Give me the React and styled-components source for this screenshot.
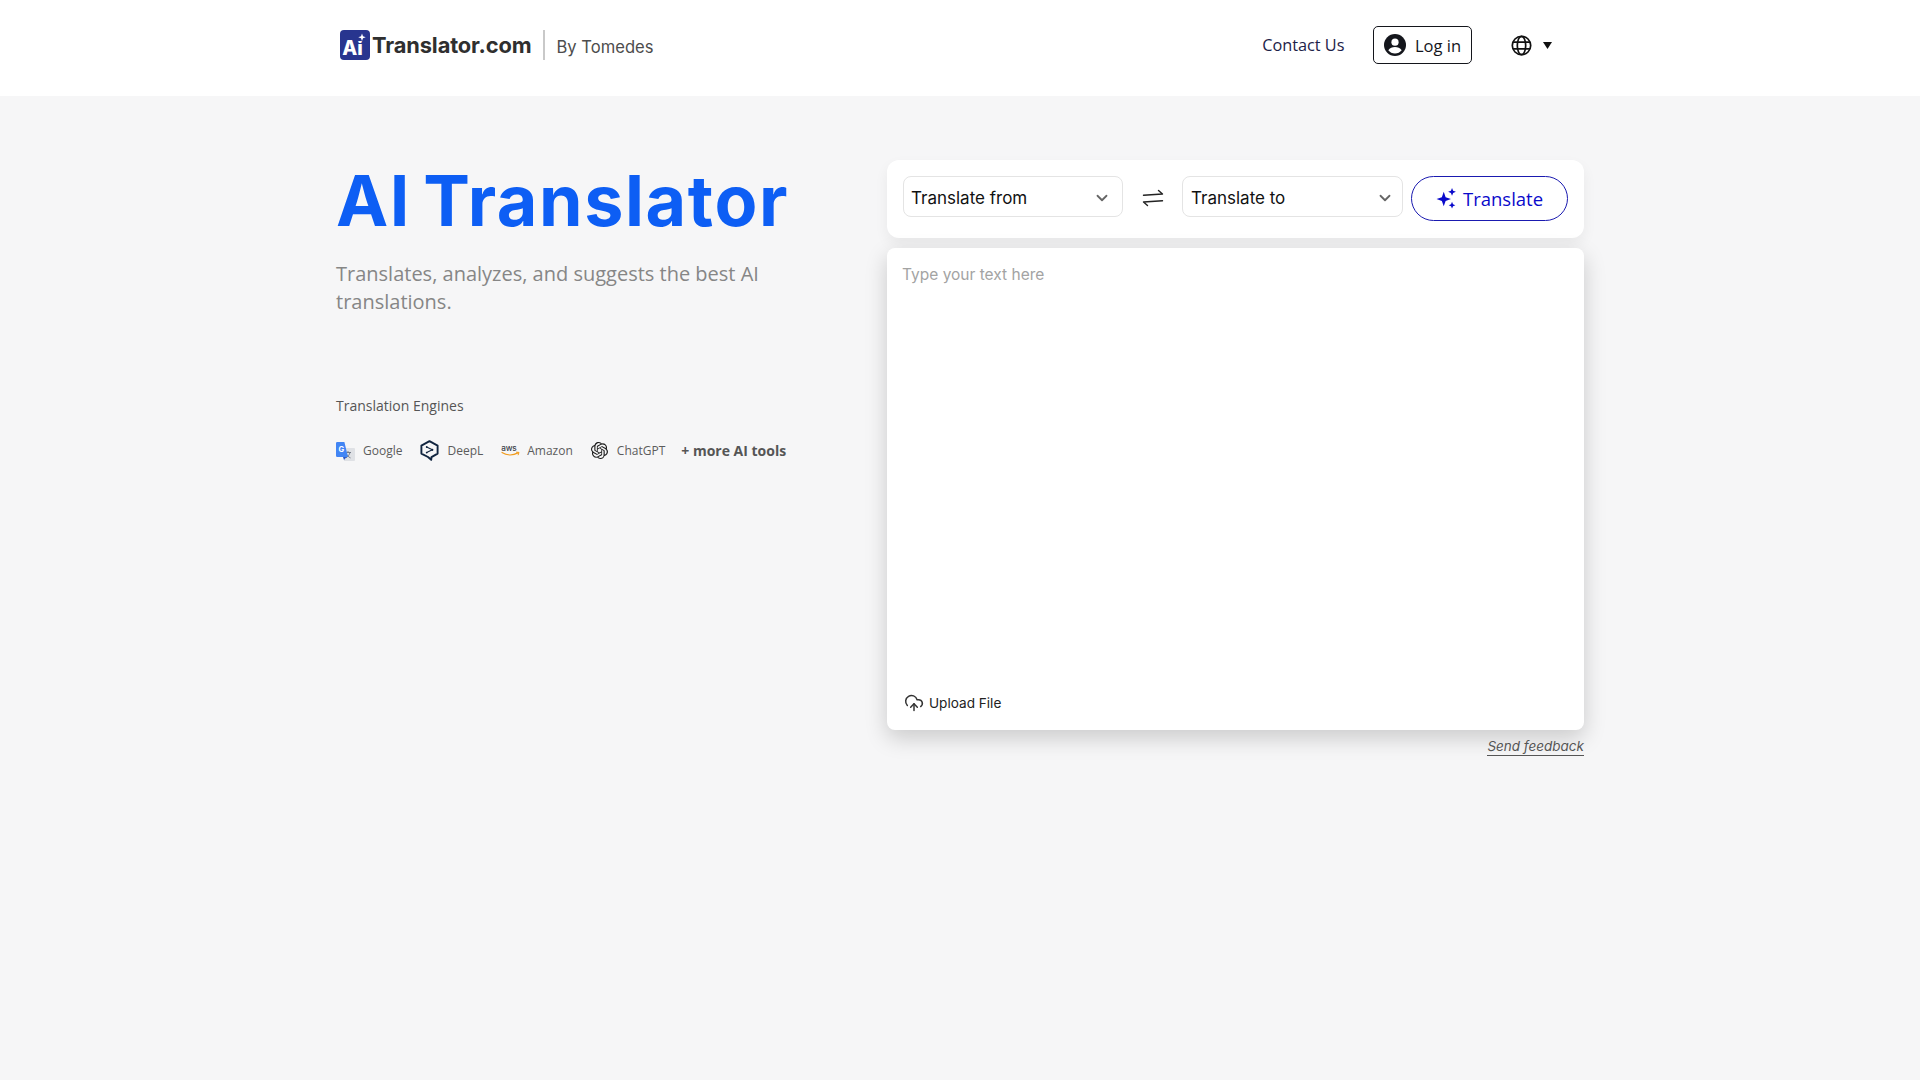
import React from "react";
import styled, { createGlobalStyle } from "styled-components";
import { ChevronDown, CloudUpload } from "lucide-react";

const Global = createGlobalStyle`
  html, body { margin: 0; padding: 0; background: #f6f6f7; }
  body { font-family: "Open Sans", sans-serif; }
  * { box-sizing: border-box; }
`;

const Page = styled.div`
  width: 1920px;
  height: 1080px;
  overflow: hidden;
  background: #f6f6f7;
`;

const Header = styled.header`
  height: 96px;
  background: #fff;
  padding: 0 368.5px 6px 340px;
  display: flex;
  align-items: center;
  justify-content: space-between;
`;

const Brand = styled.div`
  display: flex;
  align-items: center;
`;

const LogoWord = styled.span`
  font-family: Inter, sans-serif;
  font-weight: 700;
  font-size: 21.8px;
  letter-spacing: -0.1px;
  color: #2f2f2f;
  margin-left: 2px;
`;

const Divider = styled.span`
  width: 2px;
  height: 30px;
  background: #c9c9c9;
  margin: 0 12px 0 11px;
`;

const ByLine = styled.span`
  font-family: Inter, sans-serif;
  font-size: 16.6px;
  color: #4d4d4d;
  padding-top: 3px;
`;

const Nav = styled.nav`
  display: flex;
  align-items: center;
`;

const Contact = styled.a`
  font-size: 16.3px;
  font-weight: 500;
  color: #1c2248;
  margin-right: 28.5px;
`;

const Login = styled.button`
  width: 99px;
  height: 38px;
  padding: 0 0 0 10px;
  display: flex;
  align-items: center;
  gap: 9px;
  background: #fff;
  border: 1px solid #14161c;
  border-radius: 5px;
  font: 500 16.5px "Open Sans", sans-serif;
  color: #14161c;
`;

const Lang = styled.div`
  display: flex;
  align-items: center;
  margin-left: 38.5px;
  gap: 11px;
`;

const Main = styled.main`
  padding: 64px 336px 0;
  display: flex;
`;

const Left = styled.section`
  width: 551px;
`;

const Title = styled.h1`
  margin: 0;
  padding-top: 1px;
  font-family: Inter, sans-serif;
  font-weight: 700;
  font-size: 70px;
  line-height: 80px;
  letter-spacing: 1.6px;
  word-spacing: -6px;
  color: #0d5ef4;
`;

const Subtitle = styled.p`
  margin: 18.5px 0 0;
  width: 470px;
  font-size: 20px;
  line-height: 28px;
  color: #868686;
`;

const EnginesLabel = styled.div`
  margin-top: 80.5px;
  font-size: 14px;
  line-height: 20px;
  color: #555;
`;

const Engines = styled.div`
  margin-top: 21px;
  display: flex;
  align-items: center;
  height: 26px;
`;

const Engine = styled.div`
  display: flex;
  align-items: center;
  gap: ${(p) => p.$gap || 8}px;
  margin-right: ${(p) => p.$mr || 18}px;
  font-size: 12px;
  color: #5c5c5c;
`;

const More = styled.span`
  font-size: 14px;
  font-weight: 700;
  color: #555;
`;

const Right = styled.section`
  width: 697px;
`;

const Bar = styled.div`
  height: 78px;
  background: #fff;
  border-radius: 12px;
  padding: 16px;
  display: flex;
  align-items: flex-start;
  box-shadow: 0 6px 14px rgba(0, 0, 0, 0.06);
`;

const Select = styled.div`
  width: ${(p) => p.$w}px;
  height: 41px;
  border: 1px solid #e4e4e4;
  border-radius: 8px;
  padding: 3px ${(p) => p.$pr}px 0 ${(p) => p.$pl}px;
  display: flex;
  align-items: center;
  justify-content: space-between;
  font-family: Inter, sans-serif;
  font-size: 17px;
  color: #111;
`;

const Swap = styled.div`
  width: 59px;
  height: 41px;
  padding-top: 2px;
  display: flex;
  align-items: center;
  justify-content: center;
`;

const TranslateBtn = styled.button`
  margin-left: 8px;
  width: 157px;
  height: 45px;
  padding: 0;
  border: 1px solid #1a1ab0;
  border-radius: 23px;
  background: #fff;
  display: flex;
  align-items: center;
  justify-content: center;
  gap: 6px;
  font: 500 18.5px "Open Sans", sans-serif;
  color: #0a0acb;
`;

const Card = styled.div`
  margin-top: 10px;
  height: 482px;
  background: #fff;
  border-radius: 8px;
  padding: 16px;
  display: flex;
  flex-direction: column;
  justify-content: space-between;
  box-shadow: 0 8px 22px rgba(0, 0, 0, 0.18);
`;

const Placeholder = styled.div`
  margin-left: -1px;
  font-family: Inter, sans-serif;
  font-size: 15.5px;
  line-height: 22px;
  color: #a3a3a3;
`;

const Upload = styled.div`
  display: flex;
  align-items: center;
  gap: 5px;
  padding-left: 1px;
  font-family: Inter, sans-serif;
  font-size: 13.6px;
  font-weight: 400;
  color: #222;
  margin-bottom: 1px;
`;

const FeedbackRow = styled.div`
  display: flex;
  justify-content: flex-end;
  margin-top: 7px;
`;

const Feedback = styled.a`
  font-family: Inter, sans-serif;
  font-size: 13.5px;
  font-style: italic;
  line-height: 18px;
  color: #555;
  border-bottom: 1px solid #555;
`;

const IconNudge = styled.span`
  display: flex;
  margin-top: ${(p) => p.$top}px;
`;

const LogoMark = () => (
  <svg width="30" height="30" viewBox="0 0 30 30">
    <rect width="30" height="30" rx="4" fill="#28358f" />
    <text x="2.2" y="24.5" fontFamily="Inter, sans-serif" fontWeight="800" fontSize="19.5" fill="#fff">Ai</text>
    <rect x="18" y="2" width="8" height="9" fill="#28358f" />
    <path d="M22 3.5l1 2.7 2.7 1-2.7 1-1 2.7-1-2.7-2.7-1 2.7-1z" fill="#fff" />
  </svg>
);

const UserIcon = () => (
  <svg width="22" height="22" viewBox="0 0 22 22">
    <circle cx="11" cy="11" r="11" fill="#14161c" />
    <circle cx="11" cy="8.2" r="3.6" fill="#fff" />
    <path d="M4.3 16.2c1.5-2.2 4-3.2 6.7-3.2s5.2 1 6.7 3.2c-1.6 2-4 3.3-6.7 3.3s-5.1-1.3-6.7-3.3z" fill="#fff" />
  </svg>
);

const GlobeIcon = () => (
  <svg width="21" height="21" viewBox="0 0 21 21" fill="none" stroke="#111" strokeWidth="1.7">
    <circle cx="10.5" cy="10.5" r="9.2" />
    <ellipse cx="10.5" cy="10.5" rx="4.2" ry="9.2" />
    <path d="M2 7.2h17M2 13.8h17" />
  </svg>
);

const Caret = () => (
  <svg width="9" height="7" viewBox="0 0 9 7"><path d="M0 0h9L4.5 7z" fill="#111" /></svg>
);

const SwapIcon = () => (
  <svg width="22" height="18" viewBox="0 0 22 18" fill="none" stroke="#222" strokeWidth="1.4" strokeLinecap="round" strokeLinejoin="round">
    <path d="M1.5 6.3L20.5 5 16.5 1.5" />
    <path d="M20.5 11.7L1.5 13 5.5 16.5" />
  </svg>
);

const GoogleIcon = () => (
  <svg width="19" height="20" viewBox="0 0 19 20">
    <path d="M7 6h11a1 1 0 0 1 1 1v11a1 1 0 0 1-1 1H8z" fill="#dfe1e5" />
    <path d="M12 9v1.2M9.5 10.5h5.5M14 10.5c-.6 2.4-2.2 4.3-4 5.4M10.6 12.2c.8 1.6 2.3 3 3.9 3.7" stroke="#6b7280" strokeWidth="0.9" fill="none" />
    <path d="M1.2 0h7.2L12 15H1.2A1.2 1.2 0 0 1 0 13.8V1.2A1.2 1.2 0 0 1 1.2 0z" fill="#4285f4" />
    <path d="M7 15l1 3 2.5-3z" fill="#2a56c6" />
    <text x="2.4" y="10" fontFamily="Inter, sans-serif" fontWeight="700" fontSize="7.5" fill="#fff">G</text>
  </svg>
);

const DeepLIcon = () => (
  <svg width="19" height="21" viewBox="0 0 19 21" fill="none" stroke="#10243f" strokeWidth="1.9" strokeLinejoin="round">
    <path d="M9.5 1.2L17.6 5.6V13.6L11.5 17.1 11.2 19.8 8 17 1.4 13.6V5.6z" />
    <circle cx="6.7" cy="7" r="0.9" fill="#10243f" stroke="none" />
    <circle cx="6.7" cy="12.6" r="0.9" fill="#10243f" stroke="none" />
    <circle cx="12.3" cy="9.8" r="1.1" fill="#10243f" stroke="none" />
    <path d="M6.7 7l5.6 2.8-5.6 2.8" strokeWidth="1.1" />
  </svg>
);

const AwsIcon = () => (
  <svg width="19" height="14" viewBox="0 0 19 14">
    <text x="0.3" y="7.5" fontFamily="Inter, sans-serif" fontWeight="500" fontSize="8.2" letterSpacing="-0.2" fill="#3a3f4a">aws</text>
    <path d="M1 9.5c4.5 3 11 3 16 0.4" fill="none" stroke="#f19b1c" strokeWidth="1.2" strokeLinecap="round" />
    <path d="M15.5 9.2l2.5.2-.8 2.4" fill="none" stroke="#f19b1c" strokeWidth="1" strokeLinecap="round" />
  </svg>
);

const ChatGptIcon = () => (
  <svg width="17" height="17" viewBox="0 0 24 24" fill="#1a1a1a">
    <path d="M22.282 9.821a5.985 5.985 0 0 0-.516-4.91 6.046 6.046 0 0 0-6.51-2.9A6.065 6.065 0 0 0 4.981 4.18a5.985 5.985 0 0 0-3.998 2.9 6.046 6.046 0 0 0 .743 7.097 5.98 5.98 0 0 0 .51 4.911 6.051 6.051 0 0 0 6.515 2.9A5.985 5.985 0 0 0 13.26 24a6.056 6.056 0 0 0 5.772-4.206 5.99 5.99 0 0 0 3.997-2.9 6.056 6.056 0 0 0-.747-7.073zM13.26 22.43a4.476 4.476 0 0 1-2.876-1.04l.141-.081 4.779-2.758a.795.795 0 0 0 .392-.681v-6.737l2.02 1.168a.071.071 0 0 1 .038.052v5.583a4.504 4.504 0 0 1-4.494 4.494zM3.6 18.304a4.47 4.47 0 0 1-.535-3.014l.142.085 4.783 2.759a.771.771 0 0 0 .78 0l5.843-3.369v2.332a.08.08 0 0 1-.033.062L9.74 19.95a4.5 4.5 0 0 1-6.14-1.646zM2.34 7.896a4.485 4.485 0 0 1 2.366-1.973V11.6a.766.766 0 0 0 .388.676l5.815 3.355-2.02 1.168a.076.076 0 0 1-.071 0l-4.83-2.786A4.504 4.504 0 0 1 2.34 7.872zm16.597 3.855l-5.833-3.387L15.119 7.2a.076.076 0 0 1 .071 0l4.83 2.791a4.494 4.494 0 0 1-.676 8.105v-5.678a.79.79 0 0 0-.407-.667zm2.01-3.023l-.141-.085-4.774-2.782a.776.776 0 0 0-.785 0L9.409 9.23V6.897a.066.066 0 0 1 .028-.061l4.83-2.787a4.5 4.5 0 0 1 6.68 4.66zm-12.64 4.135l-2.02-1.164a.08.08 0 0 1-.038-.057V6.075a4.5 4.5 0 0 1 7.375-3.453l-.142.08L8.704 5.46a.795.795 0 0 0-.393.681zm1.097-2.365l2.602-1.5 2.607 1.5v2.999l-2.597 1.5-2.607-1.5z" />
  </svg>
);

const Sparkle = () => (
  <svg width="21" height="21" viewBox="0 0 19 19" fill="#0a0acb">
    <path d="M7 3.5l1.7 4.8L13.5 10l-4.8 1.7L7 16.5l-1.7-4.8L.5 10l4.8-1.7z" />
    <path d="M14.5 0l1 2.5 2.5 1-2.5 1-1 2.5-1-2.5-2.5-1 2.5-1z" />
    <path d="M14.5 12.5l.9 2.1 2.1.9-2.1.9-.9 2.1-.9-2.1-2.1-.9 2.1-.9z" />
  </svg>
);

export default function App() {
  return (
    <Page>
      <Global />
      <Header>
        <Brand>
          <LogoMark />
          <LogoWord>Translator.com</LogoWord>
          <Divider />
          <ByLine>By Tomedes</ByLine>
        </Brand>
        <Nav>
          <Contact>Contact Us</Contact>
          <Login><UserIcon />Log in</Login>
          <Lang><GlobeIcon /><Caret /></Lang>
        </Nav>
      </Header>
      <Main>
        <Left>
          <Title>AI Translator</Title>
          <Subtitle>Translates, analyzes, and suggests the best AI translations.</Subtitle>
          <EnginesLabel>Translation Engines</EnginesLabel>
          <Engines>
            <Engine><IconNudge $top={3}><GoogleIcon /></IconNudge>Google</Engine>
            <Engine><DeepLIcon />DeepL</Engine>
            <Engine $gap={7}><AwsIcon />Amazon</Engine>
            <Engine $gap={9} $mr={16}><ChatGptIcon />ChatGPT</Engine>
            <More>+ more AI tools</More>
          </Engines>
        </Left>
        <Right>
          <Bar>
            <Select $w={220} $pl={7} $pr={11}>Translate from<ChevronDown size={18} color="#666" strokeWidth={2.4} /></Select>
            <Swap><SwapIcon /></Swap>
            <Select $w={221} $pl={8} $pr={8}>Translate to<ChevronDown size={18} color="#666" strokeWidth={2.4} /></Select>
            <TranslateBtn><Sparkle />Translate</TranslateBtn>
          </Bar>
          <Card>
            <Placeholder>Type your text here</Placeholder>
            <Upload><CloudUpload size={20} color="#333" strokeWidth={1.8} />Upload File</Upload>
          </Card>
          <FeedbackRow><Feedback>Send feedback</Feedback></FeedbackRow>
        </Right>
      </Main>
    </Page>
  );
}
